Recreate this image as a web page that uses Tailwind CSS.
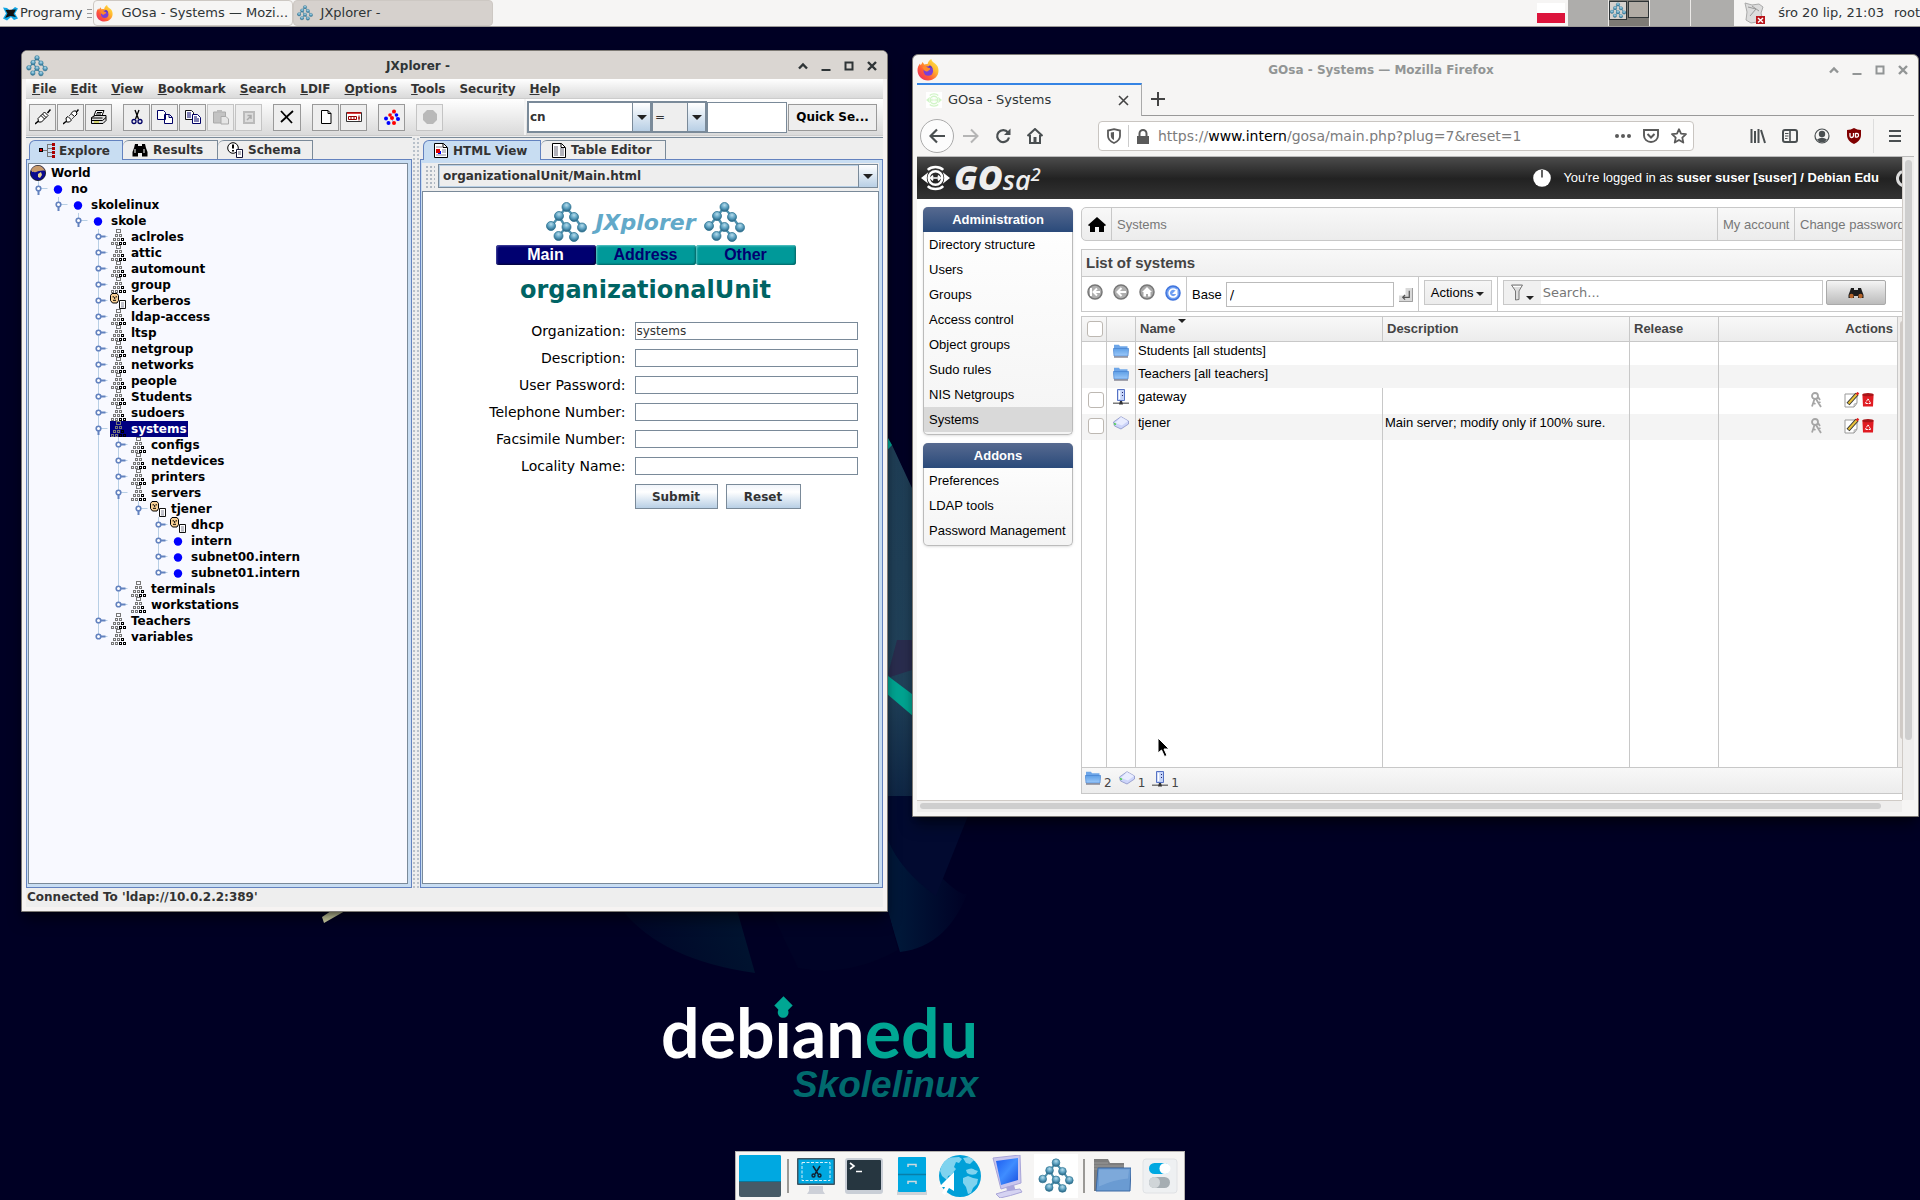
<!DOCTYPE html>
<html lang="pl">
<head>
<meta charset="utf-8">
<meta name="viewport" content="width=device-width, initial-scale=1">
<title>Desktop</title>
<script src="https://cdn.jsdelivr.net/npm/@tailwindcss/browser@4"></script>
</head>
<body class="bg-[#000024] font-['DejaVu_Sans',sans-serif] text-[13px] text-[#2e3436]">

<!-- shared symbols -->
<svg class="absolute size-0" aria-hidden="true">
  <defs>
    <radialGradient id="ball" cx=".5" cy=".3" r=".75"><stop offset="0" stop-color="#b5dcec"/><stop offset=".5" stop-color="#5a9fbf"/><stop offset="1" stop-color="#1d5573"/></radialGradient>
    <linearGradient id="fox" x1="1" y1="0" x2="0" y2="1"><stop offset="0" stop-color="#fff14f"/><stop offset=".35" stop-color="#ffb52e"/><stop offset=".65" stop-color="#ff5a36"/><stop offset="1" stop-color="#e5206f"/></linearGradient>
    <linearGradient id="fold" x1="0" y1="0" x2="0" y2="1"><stop offset="0" stop-color="#5e9fe6"/><stop offset="1" stop-color="#9cc9fa"/></linearGradient>
    <linearGradient id="scr" x1="0" y1="0" x2="1" y2="1"><stop offset="0" stop-color="#1d5cf0"/><stop offset=".5" stop-color="#3f8dff"/><stop offset="1" stop-color="#1a50e0"/></linearGradient>
    <symbol id="jx" viewBox="0 0 41 42">
      <path d="M20 6 13 15 5 25M20 6l8 9 8 11M13 15l7 11-8 9M20 26l8 9" stroke="#4d90ad" stroke-width="2.4" fill="none"/>
      <g fill="url(#ball)" stroke="#2f7593" stroke-width=".8"><circle cx="20.500" cy="5.500" r="4.500"/><circle cx="13" cy="14.500" r="4.500"/><circle cx="28" cy="15.500" r="4.500"/><circle cx="5" cy="24.500" r="4.500"/><circle cx="20.500" cy="25.500" r="4.500"/><circle cx="36" cy="26" r="4.500"/><circle cx="12.500" cy="34.500" r="4.500"/><circle cx="28" cy="35.500" r="4.500"/></g>
    </symbol>
    <symbol id="firefox" viewBox="0 0 22 22">
      <path d="M11 21.500C5 21.500.5 17 .5 11.200c0-2.700 1-5 2.500-6.700l.6 1.700C4.500 5.300 5 4.600 5.300 3c1 .9 1.500 1.700 1.800 2.600 1-.4 2.300-.6 3.500-.5.5-2 1.500-3.600 3.700-5 .2 2 1.700 3.200 3.700 4.500 2.300 1.700 3.500 4 3.500 7.200 0 5.600-4.600 9.700-10.500 9.700z" fill="url(#fox)"/>
      <circle cx="11.300" cy="12" r="4.800" fill="#7a3fd6"/><path d="M5.500 8c2-1 4-.6 5.500.8 2 .2 2.400.8 2 1.600-.5 1-2 .8-2.700 2.200-2 .2-3.800-1.500-4.800-4.600z" fill="#ff8a2a"/><path d="M11 8.500c2-.6 3.600.2 4.700 1.800-.3-2.300-1.500-3.400-3-4z" fill="#5a35c0"/>
    </symbol>
    <symbol id="orgunit" viewBox="0 0 16 16" shape-rendering="crispEdges">
      <g fill="none" stroke="#777"><path d="M6.500.5h4v3h-4zM5.500 5.500h2v2h-2zM9.500 5.500h2v2h-2zM3.500 9.500h2v2h-2zM7.500 9.500h2v2h-2zM1.500 13.500h2v2h-2zM5.500 13.500h2v2h-2z"/></g>
      <g fill="none" stroke="#000"><path d="M11.500 9.500h2v2h-2zM9.500 13.500h2v2h-2zM13.500 13.500h2v2h-2z"/></g>
    </symbol>
    <symbol id="dot" viewBox="0 0 16 16"><circle cx="8" cy="8.500" r="4.200" fill="#00f"/></symbol>
    <symbol id="person" viewBox="0 0 16 16"><path d="M2 .5h5l1.500 2v5L7 10H2.500L.5 7.500v-5z" fill="#f7cf94" stroke="#000"/><path d="M3.200 3v1.500M6.200 3v1.500M4.700 4v2M3 7.300h3" stroke="#000" fill="none"/><path d="M9.500 7.500h6v8h-6z" fill="#fff" stroke="#111"/><path d="M11 10h3M11 12h3M11 13.900h3" stroke="#889"/></symbol>
    <symbol id="world" viewBox="0 0 16 16"><circle cx="8" cy="8" r="7.600" fill="#0a0a90" stroke="#111" stroke-width=".8"/><path d="M1 5C3 1 7 0 10 1c3 1 4 3 5 5-2-1-4 0-6 0S6 8 4 7 2 7 1 5z" fill="#c79a6b"/><path d="M8 9l3-2 1 3-2 3-2-1z" fill="#e7d58c"/></symbol>
    <symbol id="bino" viewBox="0 0 16 16"><path d="M3 2h3v2h4V2h3l1 4 1.500 4v4.500h-5.500V11H6v3.500H.5V10L2 6z" fill="#000"/><path d="M3 7v4M12 7v4" stroke="#fff"/></symbol>
    <symbol id="binob" viewBox="0 0 16 16"><path d="M3 3h3v2h4V3h3l1 3 1.500 4v3h-5.500v-2H6v2H.5v-3L2 6z" fill="#1c1c1c"/><circle cx="3.500" cy="11" r="2.200" fill="#b5642a"/><circle cx="12.500" cy="11" r="2.200" fill="#b5642a"/></symbol>
    <symbol id="folder" viewBox="0 0 16 14"><path d="M1 2.500V.8h5l1 1.500h7.500V5H1z" fill="#6ea6e8"/><path d="M.3 4.500h15.400L15 12H1z" fill="url(#fold)" stroke="#3f7ccc" stroke-width=".6"/><path d="M1 13h14" stroke="#556" stroke-width="1"/></symbol>
    <symbol id="server" viewBox="0 0 16 16"><path d="M4.500.5h7v11h-7z" fill="#c3d3f8" stroke="#5672c4"/><path d="M6.500 2v8" stroke="#fff" stroke-width="1.500"/><path d="M9.500 3v1M9.500 6v1" stroke="#226"/><path d="M0 14.200h16" stroke="#666" stroke-width="1.300"/><path d="M7 12h2l1 3.500H6z" fill="#333"/></symbol>
    <symbol id="disk" viewBox="0 0 16 14"><path d="M.5 6 8 .7 15.500 5v3L8 13 1.500 10z" fill="#cdd5fa" stroke="#7f88c0" stroke-width=".7"/><path d="M8 1 15 5 9 9.500 2 7z" fill="#e9edff"/><path d="M1 7.500l2 1" stroke="#4fd04f" stroke-width="1.500"/></symbol>
    <symbol id="keys" viewBox="0 0 14 16"><g fill="none" stroke="#a5a5a5" stroke-width="1.800"><circle cx="5" cy="4" r="3"/><path d="M6 7l5 8M8.500 11l2-1M4.500 7 2 14.500M3.500 11l2 1M8 5l2 3"/></g></symbol>
    <symbol id="edit" viewBox="0 0 16 16"><path d="M1 2h12v9l-3 4H1z" fill="#fff" stroke="#999"/><path d="M4 12 13 2" stroke="#333" stroke-width="4"/><path d="M4.500 11.500 13 2" stroke="#e8c13a" stroke-width="2"/><path d="M12.500 2.500 14.500.8" stroke="#d22" stroke-width="2.500"/><path d="M10 15v-3l3-1z" fill="#ddd" stroke="#999" stroke-width=".6"/></symbol>
    <symbol id="trash" viewBox="0 0 12 16"><path d="M.4 2.500h11.200l-.6 12H1z" fill="#e01b22"/><ellipse cx="6" cy="2.700" rx="5.600" ry="1.600" fill="#a81518"/><path d="M6 6.800 8.800 11.500H3.200z" fill="none" stroke="#fff" stroke-width="1" stroke-dasharray="2 .8"/></symbol>
    <symbol id="down" viewBox="0 0 10 5"><path d="M0 0h10L5 5z" fill="#222"/></symbol>
    <symbol id="wup" viewBox="0 0 10 10"><path d="M1 7.500 5 3.500l4 4" fill="none" stroke="currentColor" stroke-width="2.400"/></symbol>
    <symbol id="wmin" viewBox="0 0 10 10"><path d="M.5 9h9" stroke="currentColor" stroke-width="2"/></symbol>
    <symbol id="wmax" viewBox="0 0 10 10"><path d="M1.500 1.500h7v7h-7z" fill="none" stroke="currentColor" stroke-width="2"/></symbol>
    <symbol id="wx" viewBox="0 0 10 10"><path d="M1 1l8 8M9 1 1 9" stroke="currentColor" stroke-width="2.400"/></symbol>
    <symbol id="gosa" viewBox="0 0 30 26"><g fill="none" stroke="currentColor" stroke-width="2.600"><path d="M7 4.500c4-4 12-4 16 0M7 21.500c4 4 12 4 16 0"/><circle cx="15" cy="13" r="7"/></g><path d="M7.500 7 0 13l7.500 6q-3-6 0-12M22.500 7l7.500 6-7.500 6q3-6 0-12" fill="currentColor"/><path d="M10 13h10M12.500 10.500 10 13l2.500 2.500M17.500 10.500 20 13l-2.500 2.500" stroke="currentColor" stroke-width="1.800" fill="none"/></symbol>
  </defs>
</svg>

<div class="relative flex min-h-screen flex-col overflow-hidden">

  <!-- wallpaper -->
  <div class="absolute inset-0">
    <svg class="absolute inset-0 size-full" viewBox="0 0 1920 1200" preserveAspectRatio="xMidYMid slice" aria-hidden="true">
      <defs>
        <linearGradient id="w1" x1="0" y1="450" x2="0" y2="920" gradientUnits="userSpaceOnUse"><stop offset="0" stop-color="#1f3e56"/><stop offset=".5" stop-color="#21425a"/><stop offset=".75" stop-color="#0e2544"/><stop offset="1" stop-color="#000a2c"/></linearGradient>
        <linearGradient id="w2" x1="900" y1="0" x2="970" y2="0" gradientUnits="userSpaceOnUse"><stop offset="0" stop-color="#001738"/><stop offset="1" stop-color="#000024"/></linearGradient>
        <linearGradient id="w3" x1="740" y1="912" x2="640" y2="960" gradientUnits="userSpaceOnUse"><stop offset="0" stop-color="#001430"/><stop offset="1" stop-color="#000628"/></linearGradient>
      </defs>
      <path d="M880 440 892 445 912 488 960 700v120q-40-10-72 0V452z" fill="url(#w1)"/>
      <path d="M888 674l9-34h15v30l-22 7z" fill="#2a2d4f"/>
      <path d="M880 800h92l-32 76q30 30 30 10-20 60-70 66l-12-40z" fill="url(#w2)"/>
      <path d="M888 840q12 30 48 56l36-90v-10h-84z" fill="#020a30"/>
      <path d="M880 424l12 21-12 13zM880 670l40 30v22l-40-34z" fill="#00a693"/>
      <path d="M622 910q40 50 133 63l-18-63z" fill="url(#w3)"/>
      <path d="M770 910h118l10 40q-50 28-100 18z" fill="#000326"/>
      <path d="M322 917l9-6h14l-21 12z" fill="#dadcae"/>
    </svg>
    <div class="absolute right-[calc(50%-18px)] bottom-[96px] flex flex-col items-end">
      <p class="font-[Lato,sans-serif] text-[68px] leading-[68px] font-bold text-white">deb<span class="relative bg-linear-to-b from-[#00a693] from-35% to-white to-35% bg-clip-text text-transparent">i<span class="absolute top-[8px] left-[2px] size-[13px] rotate-45 bg-[#00a693]"></span></span>an<span class="text-[#00a693]">edu</span></p>
      <p class="font-['Liberation_Sans',sans-serif] text-[37px] leading-[38px] font-bold text-[#016a6e] italic">Skolelinux</p>
    </div>
  </div>

  <!-- top panel -->
  <header class="relative flex h-[27px] items-center border-b border-[#9d9b98] bg-[#f6f5f4] whitespace-nowrap">
    <button class="flex h-full items-center gap-[2px] pl-[3px]">
      <svg class="size-[15px]" viewBox="0 0 15 15"><path d="M0 1.500 4 2l3.500 3L12 1l3 1.500-3 5 3 5L11 14l-3-3-4 3.500-4-2 3-5z" fill="#10a5e5"/><path d="M2.500 4 13 3.500 10.500 8l2.500 3-5.500-1L2 12l2.500-4.500z" fill="#111"/></svg>
      Programy
    </button>
    <span class="mr-px ml-1 flex w-[5px] flex-col gap-[3px]"><i class="h-px bg-[#999]"></i><i class="h-px bg-[#999]"></i><i class="h-px bg-[#999]"></i></span>
    <button class="flex h-[26px] w-[200px] items-center gap-[9px] overflow-hidden rounded-[4px] border border-[#cdc8c3] bg-[#f6f5f4] pl-[2px]"><svg class="size-[17px] shrink-0"><use href="#firefox"/></svg>GOsa - Systems — Mozi...</button>
    <button class="flex h-[26px] w-[200px] items-center gap-2 rounded-[4px] border border-[#cdc8c3] bg-[#d6d1cd] pl-[3px]"><svg class="size-4 shrink-0"><use href="#jx"/></svg>JXplorer -</button>
    <span class="mr-[3px] ml-auto h-5 w-7 bg-linear-to-b from-white from-50% to-[#dc143c] to-50%"></span>
    <span class="flex h-[26px] gap-px bg-[#eceae8]">
      <span class="w-10 bg-[#aeadab]"></span>
      <span class="flex w-10 gap-px bg-[#7d7a75] pt-px"><svg class="h-[19px] w-[18px] border border-[#2e3436] bg-[#d6d1cd]"><use href="#jx"/></svg><i class="h-[17px] w-[21px] border border-[#2e3436] bg-[#b2aca5]"></i></span>
      <span class="w-10 bg-[#aeadab]"></span>
      <span class="w-[43px] bg-[#aeadab]"></span>
    </span>
    <svg class="mr-3 ml-[10px] h-[22px] w-[22px]" viewBox="0 0 22 22"><path d="M1 1 8 3l7-1 4 3-2 6 2 8-12 2-5-3 1-8z" fill="#dcdcdc" stroke="#aaa"/><path d="M4 5l8 2-6 7M8 4l7 5" stroke="#999" fill="none"/><path d="M12 14h9v8h-9z" fill="#b9151b"/><path d="M14 16l5 4.500M19 16l-5 4.500" stroke="#fff" stroke-width="1.500"/></svg>
    <span class="mr-[10px]">śro 20 lip, 21:03</span>
    <button>root</button>
  </header>

  <main class="relative grid grid-cols-[867fr_1007fr] items-start gap-x-6 pr-px pl-[21px]">

    <!-- JXplorer window -->
    <section class="mt-[23px] flex h-[calc(100vh-338px)] min-w-0 flex-col rounded-t-[6px] border border-[#7d7a75] bg-[#f6f3f2] text-[12px] font-bold text-[#333] shadow-lg shadow-black/50">
      <div class="flex h-7 items-center rounded-t-[5px] bg-[#dad6d2] pt-px pr-[10px] pl-1 text-[#2e3436]">
        <svg class="size-[22px]"><use href="#jx"/></svg>
        <h2 class="flex-1 pr-[10px] text-center">JXplorer -</h2>
        <div class="flex gap-[13px]">
          <button aria-label="Shade"><svg class="size-[10px]"><use href="#wup"/></svg></button><button aria-label="Minimize"><svg class="size-[10px]"><use href="#wmin"/></svg></button><button aria-label="Maximize"><svg class="size-[10px]"><use href="#wmax"/></svg></button><button aria-label="Close"><svg class="size-[10px]"><use href="#wx"/></svg></button>
        </div>
      </div>
      <div class="mx-1 mb-1 flex flex-1 flex-col bg-[#eee]">
        <nav class="flex h-[20px] items-center gap-[14px] border-b border-[#ccc] bg-linear-to-b from-white to-[#dadada] pl-[6px]">
          <button><u>F</u>ile</button><button><u>E</u>dit</button><button><u>V</u>iew</button><button><u>B</u>ookmark</button><button><u>S</u>earch</button><button><u>L</u>DIF</button><button><u>O</u>ptions</button><button><u>T</u>ools</button><button>Secur<u>i</u>ty</button><button><u>H</u>elp</button>
        </nav>
        <div class="flex h-[37px] items-center border-b border-[#ccc] bg-linear-to-b from-white to-[#dadada]">
          <div class="flex h-full flex-1 items-center gap-px border-r-2 border-[#f4f4f4] pl-[3px]">
            <button aria-label="Connect" class="grid size-[27px] place-items-center border border-[#999] bg-[#eee]"><svg class="size-4" viewBox="0 0 16 16"><path d="M0 15 3.500 12M12.500 4 15.500.5" stroke="#000" stroke-width="1.500" fill="none"/><path d="M3 9.500 9.500 3l3.500 3.500L6.500 13H3.500z" fill="#fff" stroke="#000"/><path d="M6 6.500 9.500 10M7.500 5l3.500 3.500" stroke="#000"/></svg></button>
            <button aria-label="Disconnect" class="grid size-[27px] place-items-center border border-[#999] bg-[#eee]"><svg class="size-4" viewBox="0 0 16 16"><path d="M0 15 3 12.500M13 3.500 15.500.5" stroke="#000" stroke-width="1.500"/><path d="M3 9 5 7.500 8.500 11 6.500 13H3.500zM8 4.500 10.500 2h2.500l1 3-2.500 2.500z" fill="#fff" stroke="#000"/><path d="M6 7 8 5M9 10l2-2" stroke="#555"/></svg></button>
            <button aria-label="Print" class="mr-[10px] grid size-[27px] place-items-center border border-[#999] bg-[#eee]"><svg class="size-4" viewBox="0 0 16 16"><path d="M5 1.500h8l-2 5H3z" fill="#fff" stroke="#000"/><path d="M6 3.500h5M5 5h5" stroke="#000"/><path d="M.5 8.500 4 6.500h11v5l-3 3H.5z" fill="#ddd" stroke="#000"/><path d="M.5 11.500h11l3.500-3M.5 9h11" stroke="#000" fill="none"/><path d="M3 13h5" stroke="#cc0"/></svg></button>
            <button aria-label="Cut" class="grid size-[27px] place-items-center border border-[#999] bg-[#eee]"><svg class="size-4" viewBox="0 0 16 16"><path d="M6 1l3.500 9M10 1 6.500 10" stroke="#000" stroke-width="1.300"/><g fill="none" stroke="#006" stroke-width="1.300"><circle cx="5" cy="12.500" r="2"/><circle cx="11" cy="12.500" r="2"/></g></svg></button>
            <button aria-label="Copy" class="grid size-[27px] place-items-center border border-[#999] bg-[#eee]"><svg class="size-4" viewBox="0 0 16 16"><path d="M.5 1.500h6l2 2v7h-8zM7.500 5.500h5l3 3v6h-8z" fill="#fff" stroke="#006"/><path d="M12 5.500v3h3" stroke="#006" fill="none"/></svg></button>
            <button aria-label="Copy DN" class="grid size-[27px] place-items-center border border-[#999] bg-[#eee]"><svg class="size-4" viewBox="0 0 16 16"><path d="M.5 1.500h6l2 2v7h-8z" fill="#fff" stroke="#111"/><path d="M7.500 5.500h5l3 3v6h-8z" fill="#fff" stroke="#006"/><path d="M2 4h4M2 6h4M2 8h4M9 8h3M9 10h5M9 12h5" stroke="#006"/></svg></button>
            <button aria-label="Paste" class="grid size-[27px] place-items-center border border-[#c4c4c4] bg-[#eee]"><svg class="size-4" viewBox="0 0 16 16"><path d="M.5 3h12v11H.5z" fill="#c3c3c3" stroke="#aaa"/><path d="M4 1h5v3H4z" fill="#bbb"/><path d="M8 7.500h5l2.500 2.500v5H8z" fill="#e6e6e6" stroke="#aaa"/></svg></button>
            <button aria-label="Paste alias" class="mr-[10px] grid size-[27px] place-items-center border border-[#c4c4c4] bg-[#eee]"><svg class="size-4" viewBox="0 0 16 16"><path d="M3 3h10v11H3z" fill="#ddd" stroke="#bbb" stroke-width="2"/><path d="M6 11l4-4M6.500 6.500H10V10" stroke="#aaa" fill="none" stroke-width="1.500"/></svg></button>
            <button aria-label="Delete" class="mr-[10px] grid h-[27px] w-[28px] place-items-center border border-[#999] bg-[#eee]"><svg class="size-4" viewBox="0 0 16 16"><path d="M2 2l11 12M14 2 2 13" stroke="#000" stroke-width="1.800"/></svg></button>
            <button aria-label="New" class="grid size-[27px] place-items-center border border-[#999] bg-[#eee]"><svg class="size-4" viewBox="0 0 16 16"><path d="M3.500 1.500H10l3 3v10H3.500z" fill="#fff" stroke="#000"/><path d="M10 1.500v3h3" stroke="#000" fill="none"/></svg></button>
            <button aria-label="Rename" class="mr-[10px] grid size-[27px] place-items-center border border-[#999] bg-[#eee]"><svg class="size-4" viewBox="0 0 16 16"><path d="M.5 3.500h15v9H.5z" fill="#fff" stroke="#333"/><path d="M1 4h14" stroke="#c00" stroke-width="1.500"/><path d="M2.500 7.500h8v3h-8zM5 7.500v3M8 7.500v3M13 6.500v5M12 9h2" fill="none" stroke="#900"/></svg></button>
            <button aria-label="Refresh" class="mr-[10px] grid size-[27px] place-items-center border border-[#999] bg-[#eee]"><svg class="size-4" viewBox="0 0 16 16"><path d="M10 2 6 7M10 2l3 8M6 7l4 7" stroke="#99f"/><g fill="#f00"><circle cx="10" cy="2.500" r="2"/><circle cx="8" cy="9" r="2"/><circle cx="6" cy="6" r="1.800"/><circle cx="10" cy="14" r="2"/></g><g fill="#00f"><circle cx="12.500" cy="6" r="1.800"/><circle cx="2" cy="9.500" r="2"/><circle cx="14" cy="10" r="2"/><circle cx="4.500" cy="14" r="2"/></g></svg></button>
            <button aria-label="Stop" class="grid size-[27px] place-items-center border border-[#c4c4c4] bg-[#eee]"><svg class="size-[14px]" viewBox="0 0 14 14"><path d="M4 0h6l4 4v6l-4 4H4l-4-4V4z" fill="#b9b9b9"/></svg></button>
          </div>
          <form class="flex h-full w-[357px] shrink-0 items-center">
            <div class="relative ml-px h-8 w-[125px]">
              <select aria-label="Attribute" class="size-full appearance-none border-2 border-[#7a8a99] bg-white pl-px"><option>cn</option></select>
              <span class="pointer-events-none absolute inset-y-[2px] right-[2px] grid w-[18px] place-items-center border-l border-[#7a8a99] bg-linear-to-b from-white to-[#b8cfe5]"><svg class="h-[5px] w-[10px]"><use href="#down"/></svg></span>
            </div>
            <div class="relative h-8 w-[55px]">
              <select aria-label="Operator" class="size-full appearance-none border-2 border-l border-[#7a8a99] bg-[#eee] pl-[2px] font-normal"><option>=</option></select>
              <span class="pointer-events-none absolute inset-y-[2px] right-[2px] grid w-[18px] place-items-center border-l border-[#7a8a99] bg-linear-to-b from-white to-[#b8cfe5]"><svg class="h-[5px] w-[10px]"><use href="#down"/></svg></span>
            </div>
            <input aria-label="Value" class="mr-px h-[31px] w-[80px] border border-[#7a8a99] bg-white">
            <button type="button" class="h-[27px] w-[89px] border border-[#999] bg-[#eee] text-black">Quick Se...</button>
          </form>
        </div>

        <div class="mt-px flex min-h-0 flex-1">
          <!-- tree pane -->
          <div class="flex w-[386px] shrink-0 flex-col border-t border-[#7a8a99] pt-[2px]">
            <div class="flex h-[19px] pl-[3px]">
              <button class="z-1 -mb-px flex w-[94px] items-center gap-1 rounded-tl-[6px] border border-b-0 border-[#6382bf] bg-[#c8ddf2] pl-[9px]"><svg class="size-4" viewBox="0 0 16 16" shape-rendering="crispEdges"><path d="M4 7h4M8.500 1v13M8 1.500h5M8 5.500h5M8 9.500h5M8 13.500h5" stroke="#777" fill="none"/><path d="M.5 5.500h3v3h-3z" fill="#e00" stroke="#000"/><path d="M13 0h3v3h-3zM13 4h3v3h-3zM13 8h3v3h-3zM13 12h3v3h-3z" fill="#a00"/></svg>Explore</button>
              <button class="flex w-[95px] items-center gap-[5px] rounded-tl-[6px] border border-b-0 border-l-0 border-[#7a8a99] pl-[9px]"><svg class="size-4"><use href="#bino"/></svg>Results</button>
              <button class="flex w-[95px] items-center gap-[5px] rounded-tl-[6px] border border-b-0 border-l-0 border-[#7a8a99] pl-[9px]"><svg class="size-4" viewBox="0 0 16 16"><circle cx="6" cy="6" r="5.300" fill="#fff" stroke="#000"/><path d="M6 2.500v4M6 8v1.500" stroke="#000" stroke-width="2"/><path d="M9.500 7.500h6v8h-6z" fill="#fff" stroke="#113"/><path d="M11 10h3M11 12h3" stroke="#667"/></svg>Schema</button>
            </div>
            <div class="flex flex-1 flex-col border border-[#6382bf] bg-[#c8ddf2] p-px pt-[3px] pb-[3px]">
              <ul id="tree" class="mr-[2px] flex-1 border border-[#7a8a99] bg-[#f8f9ff] pt-px pl-px text-black"></ul>
            </div>
          </div>
          <!-- split handle -->
          <div class="w-2 shrink-0 bg-[radial-gradient(#b9c1ca_1px,transparent_1px)] bg-[size:4px_4px]"></div>
          <!-- detail pane -->
          <div class="flex flex-1 flex-col border-t border-[#7a8a99] pt-[2px]">
            <div class="flex h-[19px] pl-[3px]">
              <button class="z-1 -mb-px flex w-[118px] items-center gap-[5px] rounded-tl-[6px] border border-b-0 border-[#6382bf] bg-[#c8ddf2] pl-[10px]"><svg class="h-[15px] w-[14px]" viewBox="0 0 14 15"><path d="M.5.500h9l4 4v10H.5z" fill="#fff" stroke="#000"/><path d="M9 .5v4h4" fill="none" stroke="#000"/><path d="M2 4h6M8 7h4M8 9h4M2 12h10" stroke="#889"/><path d="M4 8h3v3H4z" fill="#00f"/><path d="M2 6h4v4H2z" fill="#d00"/></svg>HTML View</button>
              <button class="flex w-[125px] items-center gap-[5px] rounded-tl-[6px] border border-b-0 border-l-0 border-[#7a8a99] pl-[11px]"><svg class="h-[15px] w-[14px]" viewBox="0 0 14 15"><path d="M.5.500h9l4 4v10H.5z" fill="#fff" stroke="#000"/><path d="M9 .5v4h4" fill="none" stroke="#000"/><path d="M2 4h4M2 6h4M2 8h4M2 10h4M2 12h4M8 6h4M8 8h4M8 10h4M8 12h4" stroke="#667"/></svg>Table Editor</button>
            </div>
            <div class="flex flex-1 flex-col border border-[#6382bf] bg-[#c8ddf2] p-px pt-[3px] pb-[3px]">
              <div class="mr-[2px] flex h-[28px] items-start bg-[#eee] pr-px">
                <span class="mx-[3px] mt-[2px] h-6 w-[10px] bg-[radial-gradient(#b0b8c2_1px,transparent_1px)] bg-[size:4px_4px]"></span>
                <div class="relative mt-px h-6 flex-1">
                  <select aria-label="Template" class="size-full appearance-none border border-[#7a8a99] bg-[#eee] pl-[4px] shadow-[inset_0_0_0_1px_#b8cfe5]"><option>organizationalUnit/Main.html</option></select>
                  <span class="pointer-events-none absolute inset-y-px right-px grid w-[19px] place-items-center border-l border-[#7a8a99] bg-linear-to-b from-white to-[#b8cfe5]"><svg class="h-[5px] w-[10px]"><use href="#down"/></svg></span>
                </div>
              </div>
              <div class="mr-[2px] flex flex-1 flex-col items-center border border-[#7a8a99] bg-white pt-[9px] pr-[10px] font-normal text-black">
                <div class="flex items-center gap-2">
                  <svg class="h-[43px] w-[41px]"><use href="#jx"/></svg>
                  <span class="text-[22px] font-bold text-[#62a9c9] italic">JXplorer</span>
                  <svg class="h-[43px] w-[41px]"><use href="#jx"/></svg>
                </div>
                <div class="mt-px grid h-5 w-[300px] grid-cols-3 font-['Liberation_Sans',sans-serif] text-[16px] leading-5 font-bold text-[#000070]">
                  <button class="rounded-[3px] bg-[#000070] leading-4 text-white shadow-[inset_1px_1px_2px_#4a4aa0,inset_-1px_-1px_2px_#000030]">Main</button>
                  <button class="rounded-[3px] bg-[#009999] leading-4 shadow-[inset_1px_1px_2px_#60c8c8,inset_-1px_-1px_2px_#006060]">Address</button>
                  <button class="rounded-[3px] bg-[#009999] leading-4 shadow-[inset_1px_1px_2px_#60c8c8,inset_-1px_-1px_2px_#006060]">Other</button>
                </div>
                <h1 class="mt-[10px] mb-[17px] text-[24px] leading-[30px] font-bold text-[#006464]">organizationalUnit</h1>
                <form class="ml-11 grid grid-cols-[148px_223px] items-center gap-x-[9px] gap-y-[9px] text-[14px] leading-[18px]">
                  <label for="f1" class="text-right">Organization:</label><input id="f1" value="systems" class="h-[18px] border border-[#7a8a99] px-px text-[12px] text-[#333]">
                  <label for="f2" class="text-right">Description:</label><input id="f2" class="h-[18px] border border-[#7a8a99]">
                  <label for="f3" class="text-right">User Password:</label><input id="f3" type="password" class="h-[18px] border border-[#7a8a99]">
                  <label for="f4" class="text-right">Telephone Number:</label><input id="f4" class="h-[18px] border border-[#7a8a99]">
                  <label for="f5" class="text-right">Facsimile Number:</label><input id="f5" class="h-[18px] border border-[#7a8a99]">
                  <label for="f6" class="text-right">Locality Name:</label><input id="f6" class="h-[18px] border border-[#7a8a99]">
                  <div class="col-start-2 flex gap-2 text-[12px] font-bold text-[#333]">
                    <button type="button" class="h-[25px] w-[83px] border border-[#7a8a99] bg-linear-to-b from-[#f0f4fa] via-white via-30% to-[#b8cfe5]">Submit</button>
                    <button type="button" class="h-[25px] w-[75px] border border-[#7a8a99] bg-linear-to-b from-[#f0f4fa] via-white via-30% to-[#b8cfe5]">Reset</button>
                  </div>
                </form>
              </div>
            </div>
          </div>
        </div>
        <p class="pl-px text-[12px] leading-[19px]">Connected To 'ldap://10.0.2.2:389'</p>
      </div>
    </section>

    <!-- Firefox window -->
    <section class="mt-[27px] flex h-[calc(100vh-437px)] min-w-0 flex-col rounded-t-[6px] border border-[#7d7a75] bg-[#f6f5f4] shadow-lg shadow-black/50">
      <div class="flex h-7 items-center pt-px pr-[10px] pl-1 text-[#929595]">
        <svg class="size-[22px]"><use href="#firefox"/></svg>
        <h2 class="flex-1 pr-[6px] text-center text-[12px] font-bold">GOsa - Systems — Mozilla Firefox</h2>
        <div class="flex gap-[13px]">
          <button aria-label="Shade"><svg class="size-[10px]"><use href="#wup"/></svg></button><button aria-label="Minimize"><svg class="size-[10px]"><use href="#wmin"/></svg></button><button aria-label="Maximize"><svg class="size-[10px]"><use href="#wmax"/></svg></button><button aria-label="Close"><svg class="size-[10px]"><use href="#wx"/></svg></button>
        </div>
      </div>
      <div class="mx-1 mb-1 flex min-h-0 flex-1 flex-col">
        <div class="flex h-[33px] text-[#2e3436]">
          <div class="flex w-[225px] items-center border-t-2 border-r border-t-[#3584e4] border-r-[#aaa] pr-[12px] pb-px pl-[9px]"><svg class="mr-[6px] size-4 bg-white text-[#d2f5c8]"><use href="#gosa"/></svg>GOsa - Systems<button aria-label="Close tab" class="ml-auto"><svg class="size-[11px]" viewBox="0 0 11 11"><path d="M1 1l9 9M10 1 1 10" stroke="#444" stroke-width="1.600"/></svg></button></div>
          <div class="flex flex-1 items-center border-b border-[#999] pl-[9px]"><button aria-label="New tab"><svg class="size-[14px]" viewBox="0 0 14 14"><path d="M7 0v14M0 7h14" stroke="#444" stroke-width="2"/></svg></button></div>
        </div>
        <div class="flex h-[41px] items-center border-b border-[#bbb] pr-[13px] pl-[3px] text-[#4a4f51]">
          <button aria-label="Back" class="grid size-[34px] place-items-center rounded-full border border-[#aaa] bg-[#fcfcfc]"><svg class="h-4 w-[17px]" viewBox="0 0 17 16"><path d="M16 8H2M8 1.500 1.500 8 8 14.500" fill="none" stroke="currentColor" stroke-width="2.200"/></svg></button>
          <button aria-label="Forward" class="ml-2 text-[#b5b5b5]"><svg class="h-4 w-[17px]" viewBox="0 0 17 16"><path d="M1 8h14M9 1.500 15.500 8 9 14.500" fill="none" stroke="currentColor" stroke-width="2"/></svg></button>
          <button aria-label="Reload" class="ml-4"><svg class="size-4" viewBox="0 0 16 16"><path d="M13 4.500A6 6 0 1 0 14 9.500" fill="none" stroke="currentColor" stroke-width="2.200"/><path d="M15.500.5v6.500H9z" fill="currentColor"/></svg></button>
          <button aria-label="Home" class="ml-4"><svg class="size-4" viewBox="0 0 16 16"><path d="M.5 8 8 1l7.500 7M3 7v8h10V7" fill="none" stroke="currentColor" stroke-width="2"/><path d="M6.500 9h3v6h-3z" fill="currentColor"/></svg></button>
          <div class="ml-[55px] flex h-[30px] flex-1 items-center rounded-[4px] border border-[#c9c5c1] bg-white px-2 text-[#5a5a5a]">
            <svg class="h-4 w-[14px]" viewBox="0 0 14 16"><path d="M7 1.200 13 2.500v5.500c0 3-2.500 5.500-6 7-3.500-1.500-6-4-6-7V2.500z" fill="none" stroke="currentColor" stroke-width="1.800"/><path d="M7 4v8c-2-1-3.200-2.500-3.200-4.500V4.600z" fill="currentColor"/></svg>
            <i class="mr-2 ml-[7px] h-[22px] w-px bg-[#ccc]"></i>
            <svg class="mr-[9px] h-[15px] w-3" viewBox="0 0 12 15"><path d="M0 7h12v8H0z" fill="currentColor"/><path d="M2.500 8V4.500a3.500 3.500 0 0 1 7 0V8" fill="none" stroke="currentColor" stroke-width="2"/></svg>
            <p class="min-w-0 flex-1 text-[14px] whitespace-nowrap text-[#7c7c7c]">https://<span class="text-black">www.intern</span>/gosa/main.php?plug=7&amp;reset=1</p>
            <svg class="mr-3 h-1 w-4" viewBox="0 0 16 4"><g fill="currentColor"><circle cx="2" cy="2" r="2"/><circle cx="8" cy="2" r="2"/><circle cx="14" cy="2" r="2"/></g></svg>
            <svg class="mr-3 size-4" viewBox="0 0 16 16"><path d="M1 2h14v5.500a7 6.500 0 0 1-14 0z" fill="none" stroke="currentColor" stroke-width="1.900"/><path d="M4.500 6 8 9.500 11.500 6" fill="none" stroke="currentColor" stroke-width="2"/></svg>
            <svg class="-mr-[2px] size-4" viewBox="0 0 16 16"><path d="M8 1.200l2 4.500 5 .5-3.700 3.400 1 5L8 12l-4.300 2.600 1-5L1 6.200l5-.5z" fill="none" stroke="currentColor" stroke-width="1.800" stroke-linejoin="round"/></svg>
          </div>
          <div class="ml-[56px] flex items-center gap-4">
            <button aria-label="Library"><svg class="size-4" viewBox="0 0 16 16"><path d="M1.500 1v14M5 3v12M8.500 1v14M11 2l4 13" stroke="currentColor" stroke-width="2"/></svg></button>
            <button aria-label="Sidebars"><svg class="size-4" viewBox="0 0 16 16"><rect x="1" y="2" width="14" height="12" rx="2" fill="none" stroke="currentColor" stroke-width="2"/><path d="M8 2v12" stroke="currentColor" stroke-width="1.600"/><path d="M3 5.500h3.500M3 8h3.500M3 10.500h2.500" stroke="currentColor"/></svg></button>
            <button aria-label="Account"><svg class="size-4" viewBox="0 0 16 16"><circle cx="8" cy="8" r="7" fill="none" stroke="currentColor" stroke-width="1.200"/><circle cx="8" cy="6" r="3.200" fill="currentColor"/><path d="M3 11.500q5-3.500 10 0-2 3-5 3t-5-3z" fill="currentColor"/></svg></button>
            <button aria-label="uBlock Origin"><svg class="size-4" viewBox="0 0 16 16"><path d="M8 0q3 2 7 2v5c0 4.500-3 7-7 9-4-2-7-4.500-7-9V2q4 0 7-2z" fill="#800000"/><path d="M4 5v3q0 1.500 1.500 1.500T7.500 8V5M9.500 5v4.500M9.500 5.500q3-.5 3 1.700t-3 2" fill="none" stroke="#fff" stroke-width="1.300"/></svg></button>
          </div>
          <i class="ml-[11px] h-[34px] w-px bg-[#ddd]"></i>
          <button aria-label="Menu" class="ml-[15px]"><svg class="h-3 w-3" viewBox="0 0 12 12"><path d="M0 1h12M0 6h12M0 11h12" stroke="currentColor" stroke-width="2"/></svg></button>
        </div>

        <!-- GOsa page -->
        <div class="flex min-h-0 flex-1">
          <div class="flex min-w-0 flex-1 flex-col overflow-hidden bg-white font-['Liberation_Sans',sans-serif] text-[13px] text-black">
            <header class="flex h-[42px] shrink-0 items-center bg-linear-to-b from-[#4c4c4c] via-[#222] via-52% to-[#333] pl-1 whitespace-nowrap text-white">
              <svg class="mr-1 h-[26px] w-[29px]"><use href="#gosa"/></svg>
              <span class="flex items-baseline font-['Open_Sans',sans-serif] leading-[40px] font-extrabold text-[#eee] italic"><span class="text-[34px]">GO</span><span class="text-[27px] font-semibold">sa<sup class="text-[18px]">2</sup></span></span>
              <svg class="mr-3 ml-auto size-[18px]" viewBox="0 0 18 18"><circle cx="9" cy="9" r="8.800" fill="#fff"/><path d="M9 8.500V1" stroke="#222" stroke-width="1.400"/></svg>
              <p>You're logged in as <b>suser suser [suser] / Debian Edu</b></p>
              <svg class="-mr-3 ml-[17px] size-[18px] shrink-0" viewBox="0 0 18 18"><path d="M6 2.500a7.500 7.500 0 1 0 6 0" fill="none" stroke="#ddd" stroke-width="3"/></svg>
            </header>
            <div class="flex min-h-0 flex-1 gap-2 pt-2 pb-[6px] pl-[6px]">
              <aside class="w-[150px] shrink-0">
                <div class="mb-2 rounded-[5px] border border-[#bbb] border-t-0 bg-linear-to-b from-white to-[#f4f4f4] pb-[2px] leading-[25px] shadow-sm">
                  <h3 class="-mx-px rounded-t-[5px] bg-linear-to-b from-[#576a90] to-[#2a4a7a] text-center font-bold text-white">Administration</h3>
                  <a href="#" class="block px-[5px]">Directory structure</a><a href="#" class="block px-[5px]">Users</a><a href="#" class="block px-[5px]">Groups</a><a href="#" class="block px-[5px]">Access control</a><a href="#" class="block px-[5px]">Object groups</a><a href="#" class="block px-[5px]">Sudo rules</a><a href="#" class="block px-[5px]">NIS Netgroups</a><a href="#" class="block bg-[#d9d9d9] px-[5px]">Systems</a>
                </div>
                <div class="rounded-[5px] border border-[#bbb] border-t-0 bg-linear-to-b from-white to-[#f4f4f4] pb-[2px] leading-[25px] shadow-sm">
                  <h3 class="-mx-px rounded-t-[5px] bg-linear-to-b from-[#576a90] to-[#2a4a7a] text-center font-bold text-white">Addons</h3>
                  <a href="#" class="block px-[5px]">Preferences</a><a href="#" class="block px-[5px]">LDAP tools</a><a href="#" class="block px-[5px] whitespace-nowrap">Password Management</a>
                </div>
              </aside>
              <div class="-mr-[18px] flex min-w-0 flex-1 flex-col">
                <nav class="mb-2 flex h-[34px] shrink-0 items-center rounded-l-[5px] border border-[#c8c8c8] bg-linear-to-b from-[#f8f8f8] to-[#ececec] leading-[34px] whitespace-nowrap text-[#777]">
                  <a href="#" aria-label="Home" class="grid h-full w-[30px] place-items-center border-r border-[#c8c8c8]"><svg class="h-[15px] w-[18px]" viewBox="0 0 18 15"><path d="M9 0l9 8-1.200 1.200L16 8.500V15h-5v-5H7v5H2V8.500l-.8.7L0 8z" fill="#000"/></svg></a>
                  <a href="#" class="h-full px-[5px]">Systems</a>
                  <a href="#" class="ml-auto h-full w-[77px] border-l border-[#c8c8c8] pl-[5px]">My account</a>
                  <a href="#" class="h-full w-[125px] border-l border-[#c8c8c8] pl-[5px]">Change password</a>
                </nav>
                <div class="mb-[4px] shrink-0 border border-[#c8c8c8]">
                  <h2 class="h-[27px] border-b border-[#c8c8c8] bg-linear-to-b from-[#f8f8f8] to-[#f0f0f0] pl-1 text-[15px] leading-[26px] font-bold text-[#444]">List of systems</h2>
                  <div class="flex h-[34px] items-stretch">
                    <div class="flex items-center gap-[10px] border-r border-[#c8c8c8] pr-[5px] pb-1 pl-[5px]">
                      <button aria-label="Root"><svg class="size-4" viewBox="0 0 16 16"><circle cx="8" cy="8" r="7" fill="#b0b0b0" stroke="#777" stroke-width="1.500"/><path d="M4 4v8M13 8H7M10 4.500 6.500 8l3.500 3.500" fill="none" stroke="#fff" stroke-width="2"/></svg></button>
                      <button aria-label="Back"><svg class="size-4" viewBox="0 0 16 16"><circle cx="8" cy="8" r="7" fill="#b0b0b0" stroke="#777" stroke-width="1.500"/><path d="M13 8H5M8.500 4 4.500 8l4 4" fill="none" stroke="#fff" stroke-width="2"/></svg></button>
                      <button aria-label="Home"><svg class="size-4" viewBox="0 0 16 16"><circle cx="8" cy="8" r="7" fill="#a8a8a8" stroke="#777" stroke-width="1.500"/><path d="M8 3l5 5h-1.500v4.500h-2.500V10H7v2.500H4.500V8H3z" fill="#fff"/></svg></button>
                      <button aria-label="Reload" class="mt-[2px]"><svg class="size-4" viewBox="0 0 16 16"><circle cx="8" cy="8" r="7" fill="#6f9ff2" stroke="#3f74dd" stroke-width="1.500"/><path d="M11 5.200A4 4 0 1 0 12 9" fill="none" stroke="#fff" stroke-width="1.700"/><path d="M12.500 3.500V9H7z" fill="#fff"/></svg></button>
                    </div>
                    <div class="flex items-center border-r border-[#c8c8c8] px-[5px] pt-px"><label for="base" class="mr-[4px]">Base</label><input id="base" value="/" class="mr-[5px] h-[25px] w-[168px] border border-[#bbb] px-[3px] font-['DejaVu_Sans',sans-serif]"><button aria-label="Submit base"><svg class="size-[14px]" viewBox="0 0 15 15"><path d="M0 8h7V0h8v15H0z" fill="#d9d9d9"/><path d="M14.500 0v14.500H0" stroke="#999" fill="none"/><path d="M11 3v7H4M6.500 7.500 4 10l2.500 2.500" fill="none" stroke="#555" stroke-width="1.300"/></svg></button></div>
                    <div class="border-r border-[#c8c8c8] px-[5px] pt-[3px]"><button class="flex h-[25px] w-[68px] items-center justify-center gap-[3px] border border-[#c8c8c8] bg-linear-to-b from-[#f6f6f6] to-[#ececec]">Actions <svg class="mt-[3px] h-[4px] w-2"><use href="#down"/></svg></button></div>
                    <div class="flex flex-1 pt-[3px] pr-[33px] pl-[5px]">
                      <button aria-label="Filter" class="flex h-[25px] w-[38px] items-center gap-[3px] border border-r-0 border-[#c8c8c8] bg-[#f0f0f0] pl-[7px]"><svg class="h-[17px] w-3" viewBox="0 0 12 17"><path d="M.5 1h11L8 7v8.500L4.500 16V7z" fill="#ddd" stroke="#777"/><path d="M2 2.500h8" stroke="#fff"/></svg><svg class="mt-[10px] h-[4px] w-2"><use href="#down"/></svg></button>
                      <input aria-label="Search" placeholder="Search..." class="h-[25px] min-w-0 flex-1 border border-l-0 border-[#c8c8c8] px-[2px] font-['DejaVu_Sans',sans-serif] placeholder:text-[#777]">
                      <button aria-label="Find" class="ml-[3px] grid h-[25px] w-[60px] place-items-center rounded-[2px] border border-[#aaa] bg-linear-to-b from-[#f4f4f4] to-[#bcbcbc]"><svg class="size-4"><use href="#binob"/></svg></button>
                    </div>
                  </div>
                </div>
                <div class="flex min-h-0 flex-1">
                  <table class="h-full min-w-0 flex-1 table-fixed border border-b-0 border-[#c8c8c8]">
                    <colgroup><col class="w-[25px]"><col class="w-[29px]"><col class="w-[247px]"><col><col class="w-[89px]"><col class="w-[179px]"></colgroup>
                    <thead class="bg-linear-to-b from-[#f8f8f8] to-[#ececec] text-left text-[#444]">
                      <tr class="h-[25px]">
                        <th class="border-r border-b border-[#c8c8c8] pl-[5px]"><input type="checkbox" aria-label="Select all" class="block size-4 appearance-none rounded-[3px] border border-[#bdb8b2] bg-white"></th>
                        <th class="border-r border-b border-[#c8c8c8]"></th>
                        <th class="border-r border-b border-[#c8c8c8] pl-1"><span class="flex gap-[3px]">Name <svg class="h-[4px] w-2"><use href="#down"/></svg></span></th>
                        <th class="border-r border-b border-[#c8c8c8] pl-1">Description</th><th class="border-r border-b border-[#c8c8c8] pl-1">Release</th><th class="border-b border-[#c8c8c8] pr-1 text-right">Actions</th>
                      </tr>
                    </thead>
                    <tbody class="align-top leading-[18px]">
                      <tr class="h-[23px]"><td class="border-r border-[#c8c8c8]"></td><td class="border-r border-[#c8c8c8]"><svg class="mx-auto mt-[2px] h-[14px] w-4"><use href="#folder"/></svg></td><td colspan="2" class="border-r border-[#c8c8c8] pl-[2px]">Students [all students]</td><td class="border-r border-[#c8c8c8]"></td><td></td></tr>
                      <tr class="h-[23px] bg-[#f4f4f4]"><td class="border-r border-[#c8c8c8]"></td><td class="border-r border-[#c8c8c8]"><svg class="mx-auto mt-[2px] h-[14px] w-4"><use href="#folder"/></svg></td><td colspan="2" class="border-r border-[#c8c8c8] pl-[2px]">Teachers [all teachers]</td><td class="border-r border-[#c8c8c8]"></td><td></td></tr>
                      <tr class="h-[26px]"><td class="border-r border-[#c8c8c8] pt-[4px] pl-[6px]"><input type="checkbox" aria-label="Select gateway" class="block size-4 appearance-none rounded-[3px] border border-[#bdb8b2] bg-white"></td><td class="border-r border-[#c8c8c8]"><svg class="mx-auto mt-px size-4"><use href="#server"/></svg></td><td class="border-r border-[#c8c8c8] pl-[2px]">gateway</td><td class="border-r border-[#c8c8c8]"></td><td class="border-r border-[#c8c8c8]"></td><td><div class="flex justify-end pt-[4px] pr-[23px]"><svg class="mr-5 h-4 w-[14px]"><use href="#keys"/></svg><svg class="mr-[2px] size-4"><use href="#edit"/></svg><svg class="h-4 w-3"><use href="#trash"/></svg></div></td></tr>
                      <tr class="h-[26px] bg-[#f4f4f4]"><td class="border-r border-[#c8c8c8] pt-[4px] pl-[6px]"><input type="checkbox" aria-label="Select tjener" class="block size-4 appearance-none rounded-[3px] border border-[#bdb8b2] bg-white"></td><td class="border-r border-[#c8c8c8]"><svg class="mx-auto mt-[2px] h-[14px] w-4"><use href="#disk"/></svg></td><td class="border-r border-[#c8c8c8] pl-[2px]">tjener</td><td class="border-r border-[#c8c8c8] pl-[2px] whitespace-nowrap">Main server; modify only if 100% sure.</td><td class="border-r border-[#c8c8c8]"></td><td><div class="flex justify-end pt-[4px] pr-[23px]"><svg class="mr-5 h-4 w-[14px]"><use href="#keys"/></svg><svg class="mr-[2px] size-4"><use href="#edit"/></svg><svg class="h-4 w-3"><use href="#trash"/></svg></div></td></tr>
                      <tr><td class="border-r border-[#c8c8c8]"></td><td class="border-r border-[#c8c8c8]"></td><td class="border-r border-[#c8c8c8]"></td><td class="border-r border-[#c8c8c8]"></td><td class="border-r border-[#c8c8c8]"></td><td></td></tr>
                    </tbody>
                  </table>
                  <div class="w-[22px] shrink-0 border-t border-[#c8c8c8] bg-[#efedeb] pt-1 pb-7 pl-[2px]"><div class="h-full rounded-l-[3px] bg-[#cfcac6]"></div></div>
                </div>
                <footer class="flex h-[27px] shrink-0 items-start border border-[#c8c8c8] bg-linear-to-b from-[#f8f8f8] to-[#ececec] pt-[3px] pl-[3px] font-['DejaVu_Sans',sans-serif] text-[12px] leading-[24px] text-[#444]">
                  <svg class="mr-[3px] h-[14px] w-4"><use href="#folder"/></svg>2<svg class="mr-[3px] ml-[7px] h-[14px] w-4"><use href="#disk"/></svg>1<svg class="mr-[3px] ml-[7px] size-4"><use href="#server"/></svg>1
                </footer>
              </div>
            </div>
            <div class="h-[12px] shrink-0 border-t border-[#d0cbc6] bg-[#efeeed] pt-[2px] pr-[21px] pl-[3px]"><div class="h-[6px] rounded-full bg-[#cecece]"></div></div>
          </div>
          <div class="mb-[12px] w-3 border-l border-[#d0cbc6] bg-[#efeeed] px-[2px] pt-[3px] pb-[60px]"><div class="h-full rounded-full bg-[#cecece]"></div></div>
        </div>
      </div>
    </section>
  </main>

  <!-- mouse pointer -->
  <svg class="pointer-events-none absolute top-[737px] left-[1157px] h-[21px] w-[14px]" viewBox="0 0 14 21" aria-hidden="true"><path d="M1 1v15l3.500-3 3 6.500 2.500-1-3-6.500h5z" fill="#000" stroke="#fff"/></svg>

  <!-- dock -->
  <footer class="relative mt-auto flex h-[49px] items-center self-center border border-b-0 border-[#b5b2af] bg-[#f6f5f4]">
    <button aria-label="Show desktop" class="grid w-12 place-items-center"><svg class="size-[42px]" viewBox="0 0 42 42"><rect width="42" height="42" rx="2" fill="#465a66"/><path d="M0 26V2q0-2 2-2h38q2 0 2 2v24z" fill="#00a8e1"/><path d="M0 26.500h42" stroke="#0b7699"/></svg></button>
    <i class="mx-[3px] h-[34px] w-[2px] bg-[#9a9996]"></i>
    <button aria-label="Screenshot" class="grid w-12 place-items-center"><svg class="h-[38px] w-[40px]" viewBox="0 0 40 38"><rect x="1" y="1" width="38" height="27" rx="1" fill="#3e5562"/><rect x="2.500" y="2.500" width="35" height="24" fill="#00a8e1"/><rect x="6" y="5.500" width="28" height="18" fill="none" stroke="#d9f1fa" stroke-dasharray="3 1.500"/><path d="M17 9l5 8M24 9l-5 8" stroke="#123" stroke-width="1.500"/><circle cx="17.500" cy="18.500" r="1.500" fill="none" stroke="#123" stroke-width="1.400"/><circle cx="23.500" cy="18.500" r="1.500" fill="none" stroke="#123" stroke-width="1.400"/><path d="M13 29h14v5l2 3H11l2-3z" fill="#cdd0d8"/></svg></button>
    <button aria-label="Terminal" class="grid w-12 place-items-center"><svg class="h-[38px] w-[40px]" viewBox="0 0 40 38"><rect x="1" y="1" width="38" height="36" rx="3" fill="#c9ced6"/><rect x="3" y="3" width="34" height="30" rx="1" fill="#263640"/><path d="M6 6l4 3-4 3" fill="none" stroke="#fff" stroke-width="1.600"/><path d="M12 14.500h6" stroke="#fff" stroke-width="1.500"/></svg></button>
    <button aria-label="Files" class="grid w-12 place-items-center"><svg class="h-[40px] w-[30px]" viewBox="0 0 30 40"><rect y="34" width="30" height="5" fill="#cfd3d8"/><rect x="1" y="1" width="28" height="35" rx="1" fill="#00a8e1"/><path d="M1 18.500h28" stroke="#087fa8" stroke-width="1.500"/><path d="M11 11V8.500h8V11M11 28v-2.500h8V28" fill="none" stroke="#cfd9de" stroke-width="1.500"/></svg></button>
    <button aria-label="Web browser" class="grid w-12 place-items-center"><svg class="size-[42px]" viewBox="0 0 42 42"><circle cx="21" cy="21" r="21" fill="#00a0d8"/><path d="M1 16Q3 5 12 2.500l8-.5 3 2-3 4-3-1-2 5 2 2-5 6-3 1-1 4-5-4zM24 3l6-1 5 3-4 4-4-1zM24 23l5-2 5 2 5 1-1 5-4 4-2 5-3 1-2-7-3-4zM27 15q6-3 9 0l3 1-2 3q-5 2-9-1z" fill="#7fd3ef"/><path d="M15 17v19l-5-3-4 7-3-2 3-6H0z" fill="#fff"/></svg></button>
    <button aria-label="Thin client" class="grid w-12 place-items-center"><svg class="h-[43px] w-[32px]" viewBox="0 0 32 43"><path d="M1 3 28 0l1 28-20 6z" fill="#c9c6ee" stroke="#a9a5d8"/><path d="M4 6 26 3v22L9 30z" fill="url(#scr)"/><path d="M14 32l8-2 2 7-8 2z" fill="#aaa6dc"/><path d="M4 39q10-4 24-5l2 3q-12 4-22 6z" fill="#d5d3f2" stroke="#a9a5d8"/></svg></button>
    <button aria-label="JXplorer" class="grid w-12 place-items-center"><svg class="h-11 w-11 bg-white p-1"><use href="#jx"/></svg></button>
    <i class="mx-[3px] h-[34px] w-[2px] bg-[#9a9996]"></i>
    <button aria-label="Home folder" class="grid w-12 place-items-center"><svg class="h-[36px] w-[38px]" viewBox="0 0 38 36"><path d="M1 1h14l2 4h14v28H1z" fill="#7d7d7d"/><path d="M1 5h14M1 8h30M1 11h30" stroke="#999"/><path d="M5 10h33l-1 23H3z" fill="#6a9bd2" stroke="#3d6aa5"/><path d="M6 11.500h30l-1 9q-14 1-29 8z" fill="#8bb3e0" opacity=".6"/></svg></button>
    <button aria-label="Settings" class="grid w-12 place-items-center"><svg class="size-[36px]" viewBox="0 0 36 36"><rect x="1" y="1" width="34" height="34" rx="3" fill="#eef0f2" stroke="#e0e2e5"/><rect x="7" y="5" width="21" height="11" rx="5.500" fill="#00a8e1"/><circle cx="23" cy="10.500" r="5.500" fill="#fff"/><rect x="7" y="19" width="21" height="11" rx="5.500" fill="#a5adb2"/><circle cx="12.500" cy="24.500" r="5.500" fill="#d0d5d8"/></svg></button>
  </footer>
</div>

<script>
  // [depth, label, icon, expanded]
  const nodes = [
    [0,'World','world'],[1,'no','dot',1],[2,'skolelinux','dot',1],[3,'skole','dot',1],
    [4,'aclroles','orgunit'],[4,'attic','orgunit'],[4,'automount','orgunit'],[4,'group','orgunit'],[4,'kerberos','person'],
    [4,'ldap-access','orgunit'],[4,'ltsp','orgunit'],[4,'netgroup','orgunit'],[4,'networks','orgunit'],[4,'people','orgunit'],
    [4,'Students','orgunit'],[4,'sudoers','orgunit'],[4,'systems','orgunit',1],
    [5,'configs','orgunit'],[5,'netdevices','orgunit'],[5,'printers','orgunit'],[5,'servers','orgunit',1],
    [6,'tjener','person',1],[7,'dhcp','person'],[7,'intern','dot'],[7,'subnet00.intern','dot'],[7,'subnet01.intern','dot'],
    [5,'terminals','orgunit'],[5,'workstations','orgunit'],[4,'Teachers','orgunit'],[4,'variables','orgunit']
  ];
  // does another sibling at this level follow row i?
  const follows = (i, level) => {
    for (let j = i + 1; j < nodes.length; j++) {
      if (nodes[j][0] < level) return false;
      if (nodes[j][0] === level) return true;
    }
    return false;
  };
  document.getElementById('tree').innerHTML = nodes.map(([depth, label, icon, open], i) => {
    let lines = '';
    for (let k = 1; k <= depth; k++) {
      const x = 20 * k - 12 + 0.5, more = follows(i, k);
      if (more || k === depth) lines += `M${x} 0V${more ? 16 : 8}`;
    }
    const c = 20 * depth - 12 + 0.5;
    const guide = depth ? `<svg class="h-4 shrink-0" width="${20 * depth}" viewBox="0 0 ${20 * depth} 16"><path d="${lines}M${c} 7.500h9" stroke="#b8cfe5" fill="none"/><path d="${open ? `M${c} 9v5` : `M${c + 2} 7.500h5`}" stroke="#6382bf" stroke-width="2"/><circle cx="${c}" cy="7.500" r="2.300" fill="#fff" stroke="#6382bf" stroke-width="1.600"/></svg>` : '';
    const chosen = label === 'systems' ? 'flex h-4 items-center gap-[5px] bg-[#000080] pr-px text-white' : 'flex h-4 items-center gap-[5px]';
    return `<li class="flex h-4 items-center">${guide}<span class="${chosen}"><svg class="size-4 shrink-0"><use href="#${icon}"/></svg>${label}</span></li>`;
  }).join('');
</script>
</body>
</html>
